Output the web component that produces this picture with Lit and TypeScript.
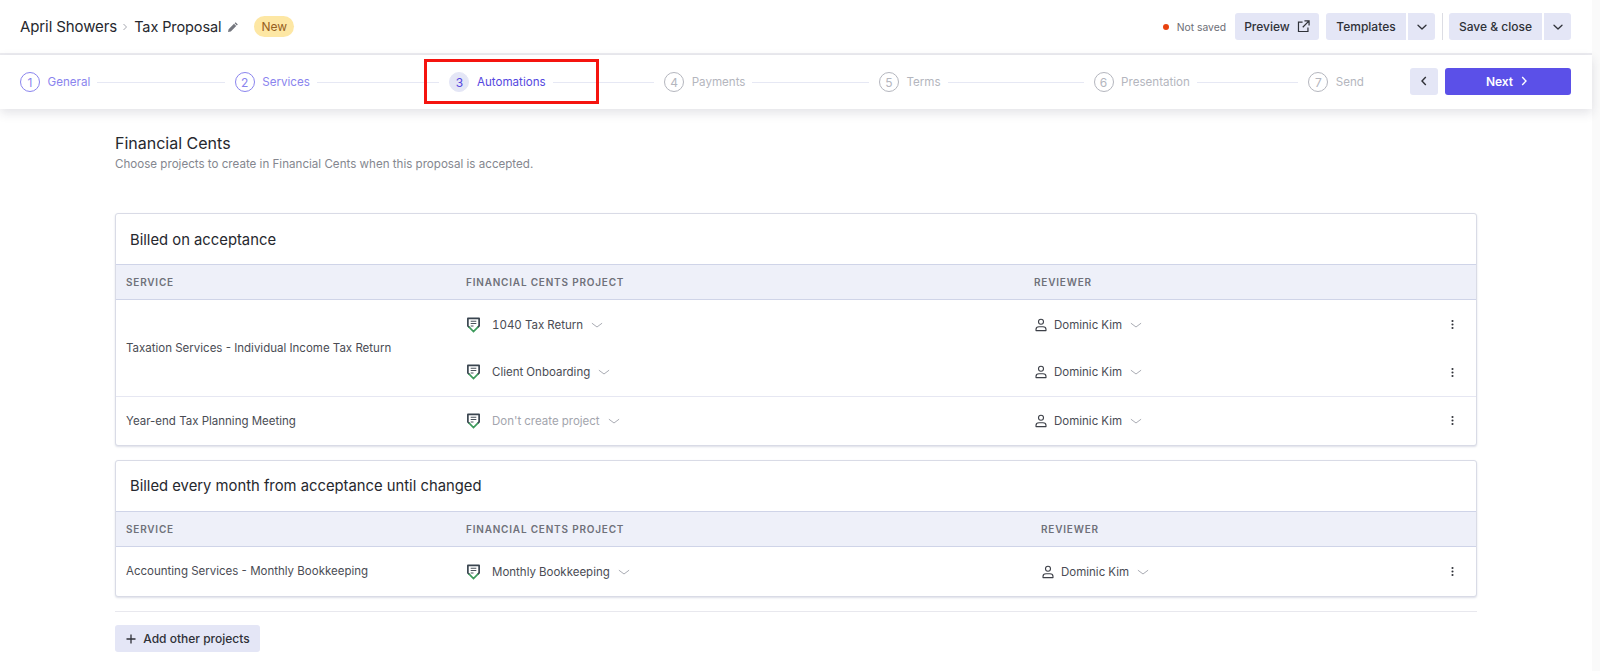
import { LitElement, html, css } from "lit";
import { customElement } from "lit/decorators.js";

const chev = (cls = "chev") => html`<svg class=${cls} viewBox="0 0 12 12" fill="none" stroke="currentColor" stroke-width="1" stroke-linecap="round" stroke-linejoin="round"><path d="M1.2 4.4 6 8l4.8-3.6"/></svg>`;
const caret = html`<svg class="chev" viewBox="0 0 12 12" fill="none" stroke="currentColor" stroke-width="1.3" stroke-linecap="round" stroke-linejoin="round"><path d="M2 4.2 6 8l4-3.8"/></svg>`;
const shield = html`<svg class="fc" viewBox="0 0 16 18" fill="none"><path d="M3.6 11.6 2 10V2h12v8l-1.6 1.6" stroke="#39444f" stroke-width="1.8" stroke-linejoin="round"/><path d="M3.6 11.6 8 16l4.4-4.4" stroke="#3d9a5c" stroke-width="1.8" stroke-linecap="round"/><path d="M5 5h6M5 7.5h6M5 10h3" stroke="#4a535c" stroke-width="1.1"/></svg>`;
const person = html`<svg class="person" viewBox="0 0 14 14" fill="none" stroke="#3d4048" stroke-width="1.1"><circle cx="7" cy="3.8" r="2.5"/><path d="M2 12.6v-1.2c0-1.6 1.4-2.6 3-2.6h4c1.6 0 3 1 3 2.6v1.2z" stroke-linejoin="round"/></svg>`;
const kebab = html`<svg class="kebab" viewBox="0 0 4 14" fill="#2f3138"><circle cx="2" cy="2.4" r="1.4"/><circle cx="2" cy="7" r="1.4"/><circle cx="2" cy="11.6" r="1.4"/></svg>`;

const steps = [
  { n: 1, label: "General", state: "done" },
  { n: 2, label: "Services", state: "done" },
  { n: 3, label: "Automations", state: "active" },
  { n: 4, label: "Payments", state: "todo" },
  { n: 5, label: "Terms", state: "todo" },
  { n: 6, label: "Presentation", state: "todo" },
  { n: 7, label: "Send", state: "todo" },
];

const groups = [
  {
    title: "Billed on acceptance",
    cls: "cols-a",
    rows: [
      {
        service: "Taxation Services - Individual Income Tax Return",
        subs: [{ project: "1040 Tax Return", muted: false }, { project: "Client Onboarding", muted: false }],
      },
      { service: "Year-end Tax Planning Meeting", subs: [{ project: "Don't create project", muted: true }] },
    ],
  },
  {
    title: "Billed every month from acceptance until changed",
    cls: "cols-b",
    rows: [
      { service: "Accounting Services - Monthly Bookkeeping", subs: [{ project: "Monthly Bookkeeping", muted: false }] },
    ],
  },
];

@customElement("app-root")
export class AppRoot extends LitElement {
  static styles = css`
    :host { display: block; min-height: 671px; background: #fafafa; font-family: Inter, "Liberation Sans", sans-serif; color: #2f3138; }
    * { box-sizing: border-box; }
    .page { position: relative; width: 1592px; min-height: 671px; background: #fff; }
    .top { height: 55px; display: flex; align-items: center; padding: 0 21px 0 20px; border-bottom: 2px solid #ececf0; }
    .crumb { display: flex; align-items: center; font-size: 15px; letter-spacing: -0.1px; color: #26282e; }
    .crumb .sep { width: 8px; height: 8px; margin: 0 5px 0 4px; color: #a6a8b0; }
    .crumb .name { font-size: 14.5px; }
    .pencil { width: 12px; height: 12px; margin-left: 6px; }
    .badge { margin-left: 15px; height: 21px; padding: 0 7px; border-radius: 11px; background: #fde7a4; color: #96601f; font-size: 12px; display: flex; align-items: center; }
    .actions { margin-left: auto; display: flex; align-items: center; }
    .dot { width: 6px; height: 6px; border-radius: 50%; background: #e8420f; margin-right: 8px; }
    .unsaved { font-size: 10.3px; color: #6c6e76; margin-right: 9px; }
    button { font-family: inherit; border: 0; background: #e4e6f6; color: #2f3138; font-size: 12px; font-weight: 500; height: 27px; border-radius: 3px; display: inline-flex; align-items: center; justify-content: center; padding: 0; }
    .preview { width: 84px; margin-right: 7px; gap: 7px; }
    .preview svg { width: 13px; height: 13px; }
    .tmpl { width: 80px; border-radius: 3px 0 0 3px; margin-right: 2px; }
    .save { width: 93px; border-radius: 3px 0 0 3px; margin-right: 2px; }
    .caret { width: 27px; border-radius: 0 3px 3px 0; }
    .caret .chev { color: #2f3138; }
    .divider { width: 1px; height: 27px; background: #dcdde4; margin: 0 6px 0 7px; }
    .chev { width: 12px; height: 12px; color: #a9abb3; flex: none; }
    .stepbar { height: 54px; display: flex; align-items: center; padding: 0 21px 0 20px; box-shadow: 0 4px 10px rgba(40, 40, 70, 0.13); }
    .steps { flex: 1; display: flex; align-items: center; padding-right: 46px; }
    .step { flex: 1; display: flex; align-items: center; font-size: 11.6px; }
    .step:last-child { flex: none; }
    .num { width: 20px; height: 20px; border-radius: 50%; border: 1px solid currentColor; display: flex; align-items: center; justify-content: center; margin-right: 7.5px; font-size: 12px; }
    .line { flex: 1; height: 1px; background: #e6e8f4; margin: 0 10px 0 7px; }
    .done { color: #8a84ee; }
    .active { color: #5548e0; }
    .active .num { border-color: #e4e6f6; background: #e4e6f6; }
    .todo { color: #b4b6be; }
    .prev { width: 28px; margin: 0 7px 2px 0; }
    .prev svg, .next svg { width: 12px; height: 12px; }
    .next { width: 126px; margin-bottom: 2px; background: #5b50e8; color: #fff; font-weight: 600; gap: 5px; border-radius: 3px; }
    .content { padding: 24px 115px 0; }
    h1 { margin: 0; font-size: 16px; font-weight: 400; line-height: 20px; color: #26282e; }
    .sub { margin: 3px 0 0; font-size: 11.6px; line-height: 16px; color: #85878f; }
    .card { margin-top: 14px; border: 1px solid #d9dbe6; border-radius: 3px; box-shadow: 0 1px 2px rgba(60, 70, 120, 0.18); background: #fff; }
    .card.first { margin-top: 41px; }
    h2 { margin: 0; height: 50px; padding: 1px 0 0 14px; display: flex; align-items: center; font-size: 14.8px; font-weight: 400; color: #26282e; }
    .head { display: grid; height: 36px; align-items: center; padding-left: 10px; background: #eef0f9; border-top: 1px solid #cfd4e8; border-bottom: 1px solid #cfd4e8; font-size: 10px; font-weight: 600; letter-spacing: 0.8px; color: #6f717a; }
    .cols-a { --project: 340px; --reviewer: 568px; --sub-height: 47.5px; }
    .cols-b { --project: 340px; --reviewer: 575px; --sub-height: 48.5px; }
    .head { grid-template-columns: var(--project) var(--reviewer) 1fr; }
    .row { display: flex; align-items: center; padding-left: 10px; font-size: 11.5px; color: #4a4c54; }
    .row + .row { border-top: 1px solid #e6e7f2; }
    .service { width: var(--project); flex: none; }
    .subs { flex: 1; }
    .head + .row .subs { padding-top: 1px; }
    .sub-row { display: grid; grid-template-columns: var(--reviewer) 1fr 24px; align-items: center; height: var(--sub-height); padding-right: 14px; }
    .pick { display: flex; align-items: center; font-variant-numeric: tabular-nums; }
    .fc { width: 15px; height: 18px; margin-right: 11px; flex: none; }
    .person { width: 14px; height: 14px; margin-right: 6px; flex: none; }
    .pick .chev { margin-left: 8px; }
    .muted { color: #a3a5ad; }
    .kebab { width: 3px; height: 11px; justify-self: end; margin-right: 8px; }
    .rule { height: 1px; background: #e8e8ee; margin-top: 14px; }
    .add { margin-top: 13px; width: 145px; gap: 6px; }
    .add svg { width: 12px; height: 12px; }
    .mark { position: absolute; left: 424px; top: 59px; width: 175px; height: 45px; border: 3px solid #f5140f; pointer-events: none; }
  `;

  render() {
    return html`<div class="page">
      <header class="top">
        <div class="crumb">April Showers
          <svg class="sep" viewBox="0 0 8 8" fill="none" stroke="currentColor"><path d="M2.5 1 5.5 4l-3 3"/></svg>
          <span class="name">Tax Proposal</span>
          <svg class="pencil" viewBox="0 0 12 12" fill="#74767e"><path d="M8.6 1.2l2.2 2.2-1 1-2.2-2.2zM7 2.8 9.2 5l-5.4 5.4-2.8.6.6-2.8z"/></svg>
        </div>
        <span class="badge">New</span>
        <div class="actions">
          <span class="dot"></span><span class="unsaved">Not saved</span>
          <button class="preview">Preview
            <svg viewBox="0 0 14 14" fill="none" stroke="currentColor" stroke-width="1.3"><path d="M6 2.2H1.6v10.2h10.2V8M8 1h5v5M13 1 6.2 7.8"/></svg>
          </button>
          <button class="tmpl">Templates</button><button class="caret">${caret}</button>
          <span class="divider"></span>
          <button class="save">Save &amp; close</button><button class="caret">${caret}</button>
        </div>
      </header>
      <nav class="stepbar">
        <div class="steps">
          ${steps.map((s, i) => html`<div class="step ${s.state}">
            <span class="num">${s.n}</span>${s.label}${i < steps.length - 1 ? html`<span class="line"></span>` : ""}
          </div>`)}
        </div>
        <button class="prev"><svg viewBox="0 0 12 12" fill="none" stroke="currentColor" stroke-width="1.4"><path d="M7.8 2 4 6l3.8 4"/></svg></button>
        <button class="next">Next <svg viewBox="0 0 12 12" fill="none" stroke="currentColor" stroke-width="1.4"><path d="M4.2 2 8 6l-3.8 4"/></svg></button>
      </nav>
      <main class="content">
        <h1>Financial Cents</h1>
        <p class="sub">Choose projects to create in Financial Cents when this proposal is accepted.</p>
        ${groups.map((g, gi) => html`<section class="card ${g.cls} ${gi === 0 ? "first" : ""}">
          <h2>${g.title}</h2>
          <div class="head"><span>SERVICE</span><span>FINANCIAL CENTS PROJECT</span><span>REVIEWER</span></div>
          ${g.rows.map((r) => html`<div class="row">
            <div class="service">${r.service}</div>
            <div class="subs">
              ${r.subs.map((s) => html`<div class="sub-row">
                <div class="pick ${s.muted ? "muted" : ""}">${shield}${s.project}${chev()}</div>
                <div class="pick">${person}Dominic Kim${chev()}</div>
                ${kebab}
              </div>`)}
            </div>
          </div>`)}
        </section>`)}
        <div class="rule"></div>
        <button class="add"><svg viewBox="0 0 12 12" fill="none" stroke="currentColor" stroke-width="1.3"><path d="M6 1.5v9M1.5 6h9"/></svg>Add other projects</button>
      </main>
      <div class="mark"></div>
    </div>`;
  }
}
